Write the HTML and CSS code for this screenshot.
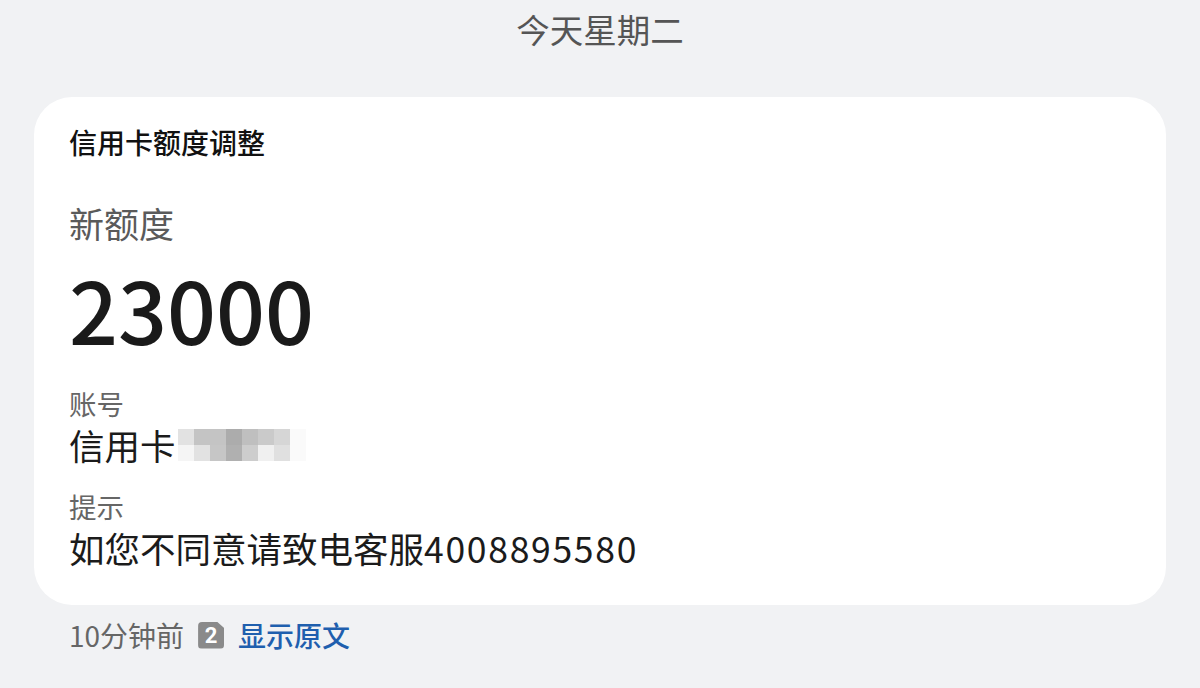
FILE: index.html
```html
<!DOCTYPE html>
<html lang="zh-CN">
<head>
  <meta charset="UTF-8">
  <title>信用卡额度调整</title>
  <link rel="stylesheet" href="styles.css">
</head>
<body>
  <div class="date">今天星期二</div>

  <div class="card">
    <div class="card-title">信用卡额度调整</div>
    <div class="amount-label">新额度</div>
    <div class="amount">23000</div>

    <div class="field-label">账号</div>
    <div class="field-value">信用卡<span class="mosaic">
      <i class="m-e2"></i><i class="m-c4"></i><i class="m-c4"></i><i class="m-ac"></i><i class="m-bf"></i><i class="m-ca"></i><i class="m-d6"></i><i class="m-fa"></i>
      <i class="m-f5"></i><i class="m-e2"></i><i class="m-c6"></i><i class="m-b0"></i><i class="m-cd"></i><i class="m-f0"></i><i class="m-e0"></i><i class="m-fa"></i>
    </span></div>

    <div class="field-label gap">提示</div>
    <div class="field-value">如您不同意请致电客服<span class="phone">4008895580</span></div>
  </div>

  <div class="footer">
    <span class="ago">10分钟前</span>
    <span class="sim">2</span>
    <span class="link">显示原文</span>
  </div>
</body>
</html>
```

FILE: styles.css
```css
body {
  margin: 0;
  background-color: #f1f2f4;
  font-family: "Noto Sans CJK SC", "Noto Sans", sans-serif;
  color: #1b1b1b;
}
.date {
  padding-top: 5px;
  font-size: 33.5px;
  line-height: 48px;
  text-align: center;
  color: #555;
}
.card {
  margin: 44px 34px 0;
  padding: 25px 35px 35px;
  background-color: #fff;
  border-radius: 38px;
}
.card-title {
  font-size: 28px;
  line-height: 40px;
  font-weight: 500;
  color: #111;
}
.amount-label {
  margin-top: 37px;
  font-size: 35px;
  line-height: 48px;
  color: #5a5a5a;
}
.amount {
  margin-top: 11px;
  font-size: 86px;
  line-height: 100px;
  font-weight: 500;
  color: #1a1a1a;
}
.field-label {
  margin-top: 27px;
  font-size: 27.5px;
  line-height: 36px;
  color: #666;
}
.field-label.gap {
  margin-top: 21px;
}
.field-value {
  margin-top: 2px;
  font-size: 35.5px;
  line-height: 44px;
  display: flex;
  align-items: center;
}
.phone {
  letter-spacing: 1.7px;
}
.mosaic {
  display: grid;
  grid-template-columns: repeat(8, 16px);
  grid-template-rows: repeat(2, 16px);
  margin-left: 2px;
}
.mosaic i { display: block; }
.m-e2 { background: #e2e2e2; }
.m-c4 { background: #c4c4c4; }
.m-ac { background: #acacac; }
.m-bf { background: #bfbfbf; }
.m-ca { background: #cacaca; }
.m-d6 { background: #d6d6d6; }
.m-fa { background: #fafafa; }
.m-f5 { background: #f5f5f5; }
.m-c6 { background: #c6c6c6; }
.m-b0 { background: #b0b0b0; }
.m-cd { background: #cdcdcd; }
.m-f0 { background: #f0f0f0; }
.m-e0 { background: #e0e0e0; }
.footer {
  display: flex;
  align-items: center;
  margin: 10px 0 0 69px;
  font-size: 28px;
  line-height: 40px;
}
.ago {
  color: #666;
}
.sim {
  margin-left: 14px;
  width: 26px;
  height: 27px;
  display: flex;
  align-items: center;
  justify-content: center;
  background-color: #8a8a8a;
  border-radius: 4px;
  clip-path: polygon(0 0, 72% 0, 100% 24%, 100% 100%, 0 100%);
  color: #fff;
  font-family: "Roboto", sans-serif;
  font-size: 22px;
  font-weight: 700;
  line-height: 27px;
}
.link {
  margin-left: 14px;
  color: #1f5fae;
  font-weight: 500;
}
```
